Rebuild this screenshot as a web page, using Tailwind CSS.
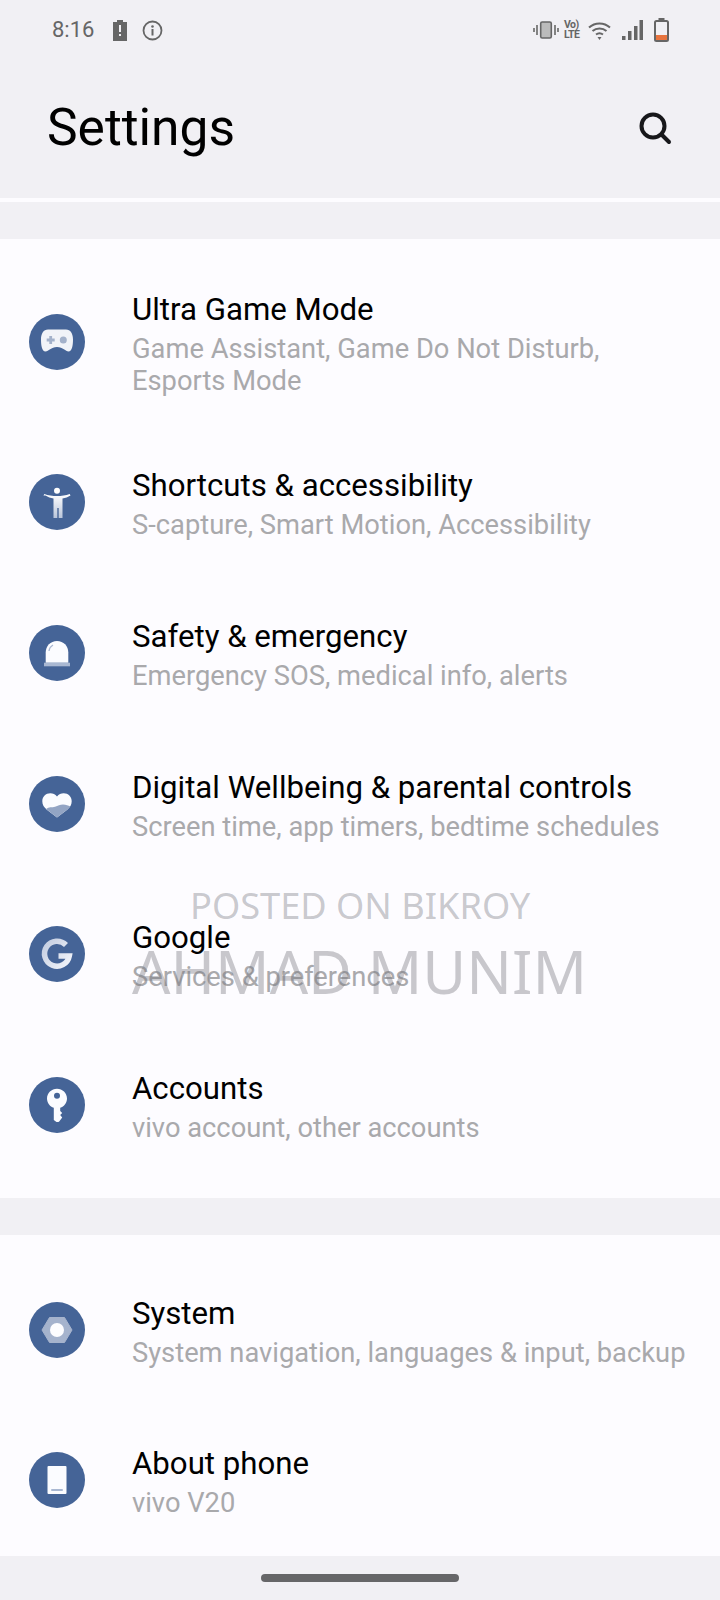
<!DOCTYPE html>
<html lang="en">
<head>
    <meta charset="UTF-8">
    <title>Settings</title>
    <script src="https://cdn.jsdelivr.net/npm/@tailwindcss/browser@4"></script>
</head>
<body class="bg-[#f1f0f4] font-['Roboto',sans-serif]">
<div class="relative w-[720px] h-[1600px] overflow-hidden flex flex-col">
    <!-- status bar -->
    <div class="h-[60px] flex items-center justify-between pl-[52px] pr-[51px]">
        <div class="flex items-center text-[#666]">
            <span class="text-[22px] leading-none w-[43px]">8:16</span>
            <svg class="ml-[18px] w-[14px] h-[21px]" viewBox="0 0 14 21"><path fill="#666" d="M4 0h6v2h4v19H0V2h4z"/><rect x="6" y="5" width="2" height="7" fill="#f1f0f4"/><rect x="6" y="14" width="2" height="2" fill="#f1f0f4"/></svg>
            <svg class="ml-[15px] w-[21px] h-[21px]" viewBox="0 0 21 21"><circle cx="10.5" cy="10.5" r="9" fill="none" stroke="#666" stroke-width="1.8"/><rect x="9.5" y="9" width="2" height="6.5" fill="#666"/><circle cx="10.5" cy="6.5" r="1.3" fill="#666"/></svg>
        </div>
        <div class="flex items-center">
            <svg class="w-[26px] h-[18px]" viewBox="0 0 26 18"><rect x="7.7" y="1" width="10.6" height="16" rx="1.5" fill="#bbb" stroke="#666" stroke-width="1.6"/><path stroke="#777" stroke-width="1.8" d="M4 4v10M1 7v4M22 4v10M25 7v4"/></svg>
            <span class="ml-[5px] w-[19px] text-[#666] text-[10.5px] font-bold leading-[10px] tracking-[-0.5px]">Vo)<br>LTE</span>
            <svg class="ml-[5px] w-[23px] h-[19px]" viewBox="0 0 23 19"><g fill="none" stroke="#666" stroke-width="2"><path d="M1 6.5C7 1 16 1 22 6.5"/><path d="M4.5 10C8.5 6.5 14.5 6.5 18.5 10"/><path d="M8 13.5C10 12 13 12 15 13.5"/></g><path fill="#666" d="M9.5 16h4l-2 3z"/></svg>
            <svg class="ml-[11px] w-[21px] h-[20px]" viewBox="0 0 21 20"><path fill="#666" d="M0 16h3.5v4H0zM6 11h3.500v9H6zM12 6h3.500v14H12zM17.500 0H21v20h-3.500z"/></svg>
            <svg class="ml-[11px] w-[15px] h-[24px]" viewBox="0 0 15 24"><rect x="4.500" y="0" width="6" height="3" fill="#666"/><rect x="1" y="3" width="13" height="20" rx="1.500" fill="none" stroke="#666" stroke-width="2"/><rect x="2" y="17" width="11" height="5" fill="#e8743f"/></svg>
        </div>
    </div>

    <!-- header -->
    <div class="h-[138px] flex items-center justify-between pl-[47px] pr-[48px] pb-[3px]">
        <h1 class="text-[51.5px] text-black leading-none">Settings</h1>
        <svg class="w-[34px] h-[34px]" viewBox="0 0 34 34"><circle cx="15" cy="15" r="11.500" fill="none" stroke="#17171a" stroke-width="4"/><path d="M24 24l7 7" stroke="#17171a" stroke-width="4" stroke-linecap="round"/></svg>
    </div>

    <div class="h-[4px] bg-[#fdfcff]"></div>
    <div class="h-[37px]"></div>

    <!-- first group -->
    <div class="bg-[#fdfcff] pt-[18px] pb-[18px]">
        <div class="h-[170px] flex items-center">
            <div class="ml-[29px] w-[56px] h-[56px] shrink-0 rounded-full bg-[#456497] flex items-center justify-center">
                <svg class="w-[44px] h-[44px]" viewBox="0 0 44 44"><path fill="#f1f3f8" d="M13 9.500h18c4.500 0 7 4 7 10 0 6-1 12-4.500 12-3 0-5.500-4.500-11.500-4.500s-8.500 4.500-11.500 4.500C7 31.500 6 25.500 6 19.500c0-6 2.500-10 7-10z"/><path fill="#a3b1ca" d="M14.300 16h2.800v2.600h2.600v2.800h-2.600V24h-2.800v-2.600h-2.600v-2.800h2.600z"/><circle cx="28.300" cy="20" r="3.500" fill="#a3b1ca"/></svg>
            </div>
            <div class="ml-[47px] pt-[4px]">
                <div class="text-[31.2px] leading-[38px] text-black">Ultra Game Mode</div>
                <div class="text-[27.3px] leading-[32px] text-[#a9a9ac] mt-[4px]">Game Assistant, Game Do Not Disturb,<br>Esports Mode</div>
            </div>
        </div>
        <div class="h-[150.7px] flex items-center">
            <div class="ml-[29px] w-[56px] h-[56px] shrink-0 rounded-full bg-[#456497] flex items-center justify-center">
                <svg class="w-[44px] h-[44px]" viewBox="0 0 44 44"><defs><linearGradient id="g1" x1="0" y1="0" x2="0" y2="1"><stop offset="0" stop-color="#fff"/><stop offset="1" stop-color="#b9c5da"/></linearGradient></defs><circle cx="22" cy="10.700" r="3" fill="#fff"/><path fill="url(#g1)" d="M8.500 15.500l.8-1.500c4 1.500 8.200 2 12.700 2s8.700-.5 12.700-2l.8 1.500c-2.500 1.500-5 2.500-8 3V38h-3.800V28h-1.400v10h-3.800V18.500c-3-.5-5.500-1.500-8-3z"/></svg>
            </div>
            <div class="ml-[47px] pt-[4px]">
                <div class="text-[31.2px] leading-[38px] text-black">Shortcuts &amp; accessibility</div>
                <div class="text-[27.3px] leading-[32px] text-[#a9a9ac] mt-[4px]">S-capture, Smart Motion, Accessibility</div>
            </div>
        </div>
        <div class="h-[150.7px] flex items-center">
            <div class="ml-[29px] w-[56px] h-[56px] shrink-0 rounded-full bg-[#456497] flex items-center justify-center">
                <svg class="w-[44px] h-[44px]" viewBox="0 0 44 44"><path fill="#fbfcff" d="M10.700 31.700V21.500C10.700 15 15.500 10 22 10s11.300 5 11.300 11.500v10.200z"/><rect x="9" y="31.700" width="26" height="3.600" fill="#a9b8d2"/><path d="M14 20c.5-3 1.800-4.800 4-6" fill="none" stroke="#a9b8d2" stroke-width="1.300"/></svg>
            </div>
            <div class="ml-[47px] pt-[4px]">
                <div class="text-[31.2px] leading-[38px] text-black">Safety &amp; emergency</div>
                <div class="text-[27.3px] leading-[32px] text-[#a9a9ac] mt-[4px]">Emergency SOS, medical info, alerts</div>
            </div>
        </div>
        <div class="h-[150.7px] flex items-center">
            <div class="ml-[29px] w-[56px] h-[56px] shrink-0 rounded-full bg-[#456497] flex items-center justify-center">
                <svg class="w-[44px] h-[44px]" viewBox="0 0 44 44"><path fill="#fbfcff" d="M22 14.500c1.800-2 4-3.200 6.700-3.200 4.500 0 8 3.500 8 8 0 3.500-1.700 6-4.500 8.500L22 35.500 11.800 27.800C9 25.300 7.300 22.800 7.300 19.300c0-4.500 3.500-8 8-8 2.700 0 4.900 1.200 6.700 3.200z"/><path fill="#93a5c4" d="M11 27c3-2.200 6-1.300 9-2.200 3-1 5-2.300 8-2.300 3 0 5.500 1 7.200 2-.7 1-1.500 2-3 3.300L22 35.500z"/></svg>
            </div>
            <div class="ml-[47px] pt-[4px]">
                <div class="text-[31.2px] leading-[38px] text-black">Digital Wellbeing &amp; parental controls</div>
                <div class="text-[27.3px] leading-[32px] text-[#a9a9ac] mt-[4px]">Screen time, app timers, bedtime schedules</div>
            </div>
        </div>
        <div class="h-[150.7px] flex items-center">
            <div class="ml-[29px] w-[56px] h-[56px] shrink-0 rounded-full bg-[#456497] flex items-center justify-center">
                <svg class="w-[44px] h-[44px]" viewBox="0 0 44 44"><defs><linearGradient id="g2" gradientUnits="userSpaceOnUse" x1="8" y1="10" x2="36" y2="34"><stop offset="0" stop-color="#c2cce0"/><stop offset="1" stop-color="#f4f6fb"/></linearGradient></defs><path fill="none" stroke="url(#g2)" stroke-width="5.500" d="M31 13A12.500 12.500 0 1 0 34.300 24H23.500"/></svg>
            </div>
            <div class="ml-[47px] pt-[4px]">
                <div class="text-[31.2px] leading-[38px] text-black">Google</div>
                <div class="text-[27.3px] leading-[32px] text-[#a9a9ac] mt-[4px]">Services &amp; preferences</div>
            </div>
        </div>
        <div class="h-[150.7px] flex items-center">
            <div class="ml-[29px] w-[56px] h-[56px] shrink-0 rounded-full bg-[#456497] flex items-center justify-center">
                <svg class="w-[44px] h-[44px]" viewBox="0 0 44 44"><path fill="#fbfcff" fill-rule="evenodd" d="M22 5.700c5.500 0 10 4.400 10 9.800 0 4.300-2.800 8-6.800 9.300V28l2 2-2 2 2 2.500-3 4c-1 .7-2.400.7-3.400 0l-2-1.500V24.800C14.800 23.500 12 19.800 12 15.500c0-5.400 4.500-9.800 10-9.800zm0 4a3 3 0 100 6 3 3 0 000-6z"/></svg>
            </div>
            <div class="ml-[47px] pt-[4px]">
                <div class="text-[31.2px] leading-[38px] text-black">Accounts</div>
                <div class="text-[27.3px] leading-[32px] text-[#a9a9ac] mt-[4px]">vivo account, other accounts</div>
            </div>
        </div>
    </div>

    <div class="h-[37px]"></div>

    <!-- second group -->
    <div class="bg-[#fdfcff] pt-[19px]">
        <div class="h-[150.7px] flex items-center">
            <div class="ml-[29px] w-[56px] h-[56px] shrink-0 rounded-full bg-[#456497] flex items-center justify-center">
                <svg class="w-[44px] h-[44px]" viewBox="0 0 44 44"><path fill="#a5b3cd" stroke="#a5b3cd" stroke-width="1" stroke-linejoin="round" d="M14.500 9.500h15L37 22l-7.500 12.500h-15L7 22z"/><circle cx="22" cy="22" r="7" fill="#fdfdff"/></svg>
            </div>
            <div class="ml-[47px] pt-[4px]">
                <div class="text-[31.2px] leading-[38px] text-black">System</div>
                <div class="text-[27.3px] leading-[32px] text-[#a9a9ac] mt-[4px] whitespace-nowrap">System navigation, languages &amp; input, backup</div>
            </div>
        </div>
        <div class="h-[150.7px] flex items-center">
            <div class="ml-[29px] w-[56px] h-[56px] shrink-0 rounded-full bg-[#456497] flex items-center justify-center">
                <svg class="w-[44px] h-[44px]" viewBox="0 0 44 44"><rect x="12.500" y="8" width="19" height="28" rx="1" fill="#fbfcff"/><rect x="16" y="31" width="12" height="2" rx="1" fill="#a9b8d2"/></svg>
            </div>
            <div class="ml-[47px] pt-[4px]">
                <div class="text-[31.2px] leading-[38px] text-black">About phone</div>
                <div class="text-[27.3px] leading-[32px] text-[#a9a9ac] mt-[4px]">vivo V20</div>
            </div>
        </div>
    </div>

    <!-- gesture bar -->
    <div class="flex-1 flex justify-center pt-[18px]">
        <div class="w-[198px] h-[8px] rounded-full bg-[#666668]"></div>
    </div>

    <!-- watermark -->
    <div class="absolute left-[190px] top-[887px] text-[36.2px] leading-none text-[#77777f]/40 font-['Noto_Sans',sans-serif] whitespace-nowrap">POSTED ON BIKROY</div>
    <div class="absolute left-[132px] top-[941px] text-[60.2px] leading-none text-[#77777f]/40 font-['Noto_Sans',sans-serif] whitespace-nowrap">AHMAD MUNIM</div>
</div>
</body>
</html>
